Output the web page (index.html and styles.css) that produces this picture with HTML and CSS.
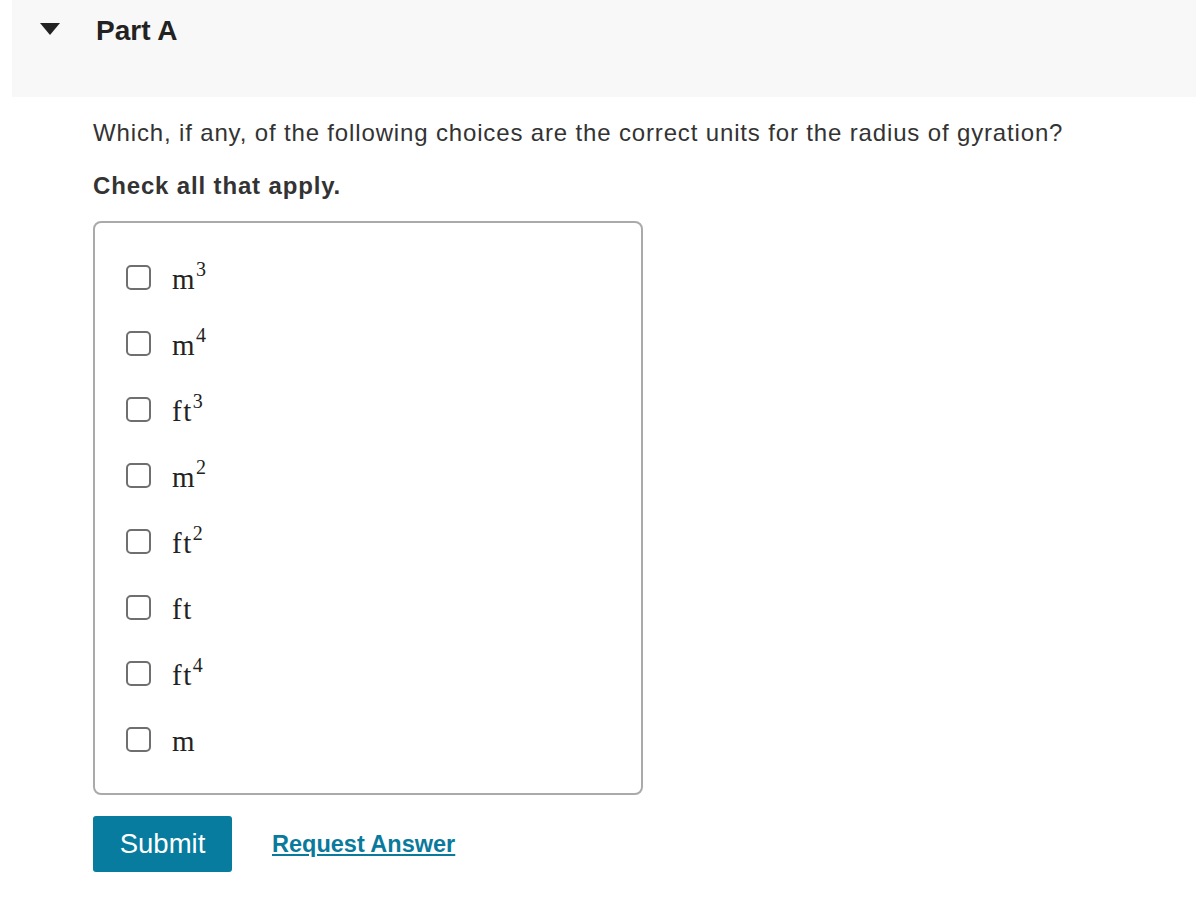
FILE: index.html
```html
<!DOCTYPE html>
<html>
<head>
<meta charset="utf-8">
<link rel="stylesheet" href="styles.css">
</head>
<body>
<div class="part-header">
  <span class="caret"></span>
  <h2 class="part-title">Part A</h2>
</div>
<div class="part-body">
  <p class="question">Which, if any, of the following choices are the correct units for the radius of gyration?</p>
  <p class="instruction">Check all that apply.</p>
  <div class="choices">
    <label class="choice"><span class="box"></span><span class="math">m<sup>3</sup></span></label>
    <label class="choice"><span class="box"></span><span class="math">m<sup>4</sup></span></label>
    <label class="choice"><span class="box"></span><span class="math">ft<sup>3</sup></span></label>
    <label class="choice"><span class="box"></span><span class="math">m<sup>2</sup></span></label>
    <label class="choice"><span class="box"></span><span class="math">ft<sup>2</sup></span></label>
    <label class="choice"><span class="box"></span><span class="math">ft</span></label>
    <label class="choice"><span class="box"></span><span class="math">ft<sup>4</sup></span></label>
    <label class="choice"><span class="box"></span><span class="math">m</span></label>
  </div>
  <div class="actions">
    <button class="submit">Submit</button>
    <a class="request" href="#">Request Answer</a>
  </div>
</div>
</body>
</html>
```
FILE: styles.css
```css
html, body {
  margin: 0;
  padding: 0;
  background: #ffffff;
  font-family: "Liberation Sans", Arial, sans-serif;
  color: #333333;
}
.part-header {
  margin-left: 12px;
  height: 97px;
  background: #f8f8f8;
  display: flex;
  align-items: flex-start;
}
.caret {
  width: 0;
  height: 0;
  border-left: 10.5px solid transparent;
  border-right: 10.5px solid transparent;
  border-top: 12px solid #222222;
  margin: 23px 0 0 28px;
}
.part-title {
  margin: 17px 0 0 36px;
  font-size: 28px;
  line-height: 28px;
  font-weight: bold;
  color: #222222;
}
.part-body {
  padding: 0 0 0 93px;
}
.question {
  margin: 20px 0 0 0;
  font-size: 24px;
  line-height: 32px;
  letter-spacing: 0.85px;
}
.instruction {
  margin: 21px 0 0 0;
  font-size: 24px;
  font-weight: bold;
  line-height: 32px;
  letter-spacing: 0.85px;
}
.choices {
  box-sizing: border-box;
  width: 550px;
  height: 574px;
  margin-top: 19px;
  border: 2px solid #aaaaaa;
  border-radius: 8px;
  padding: 42px 0 0 31px;
  display: flex;
  flex-direction: column;
  gap: 41px;
}
.choice {
  display: flex;
  align-items: flex-start;
  height: 25px;
}
.box {
  box-sizing: border-box;
  width: 25px;
  height: 25px;
  border: 2px solid #6f6f6f;
  border-radius: 5px;
  margin-right: 21px;
  flex: none;
}
.math {
  font-family: "Liberation Serif", "Times New Roman", serif;
  font-size: 29px;
  color: #222222;
  line-height: 25px;
  margin-top: 2px;
  letter-spacing: 1.5px;
}
.math sup {
  font-size: 20px;
  vertical-align: baseline;
  position: relative;
  top: -13px;
  letter-spacing: 0;
}
.actions {
  display: flex;
  align-items: center;
  margin-top: 21px;
  gap: 40px;
}
.submit {
  width: 139px;
  height: 56px;
  background: #077c9e;
  color: #ffffff;
  border: none;
  border-radius: 3px;
  font-family: "Liberation Sans", Arial, sans-serif;
  font-size: 27.5px;
  padding: 0;
}
.request {
  color: #0a7a9c;
  font-size: 23.5px;
  font-weight: bold;
  text-decoration: underline;
}
```
